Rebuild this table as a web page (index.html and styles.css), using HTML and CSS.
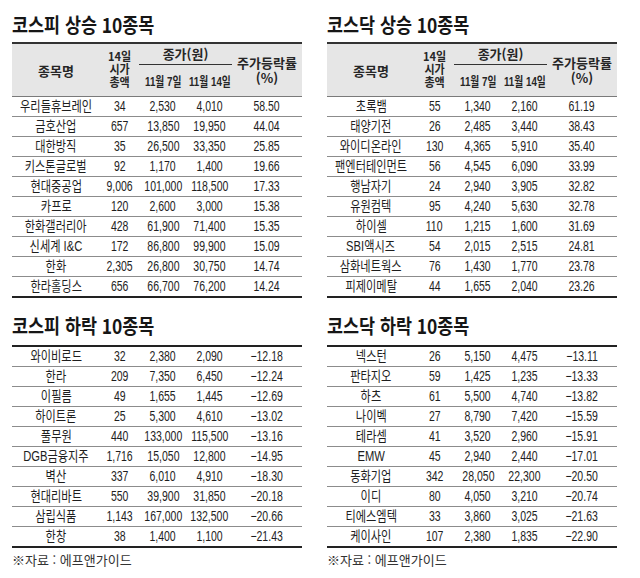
FILE: index.html
```html
<!DOCTYPE html>
<html lang="ko">
<head>
<meta charset="utf-8">
<title>상승·하락 10종목</title>
<link rel="stylesheet" href="styles.css">
</head>
<body>
<div class="page">
  <section class="panel upper">
    <h2 class="title"><span>코스피 상승 10종목</span></h2>
    <table class="stocks">
      <colgroup><col class="c-name"><col class="c-cap"><col class="c-p1"><col class="c-p2"><col class="c-chg"></colgroup>
      <thead>
        <tr><th rowspan="2" class="h-name">종목명</th><th rowspan="2" class="h-cap"><span>14일<br>시가<br>총액</span></th><th colspan="2" class="h-close">종가(원)</th><th rowspan="2" class="h-chg">주가등락률<br>(%)</th></tr>
        <tr><th class="h-date"><span>11월 7일</span></th><th class="h-date"><span>11월 14일</span></th></tr>
      </thead>
      <tbody>
        <tr><td><span>우리들휴브레인</span></td><td><span>34</span></td><td><span>2,530</span></td><td><span>4,010</span></td><td><span>58.50</span></td></tr>
        <tr><td><span>금호산업</span></td><td><span>657</span></td><td><span>13,850</span></td><td><span>19,950</span></td><td><span>44.04</span></td></tr>
        <tr><td><span>대한방직</span></td><td><span>35</span></td><td><span>26,500</span></td><td><span>33,350</span></td><td><span>25.85</span></td></tr>
        <tr><td><span>키스톤글로벌</span></td><td><span>92</span></td><td><span>1,170</span></td><td><span>1,400</span></td><td><span>19.66</span></td></tr>
        <tr><td><span>현대중공업</span></td><td><span>9,006</span></td><td><span>101,000</span></td><td><span>118,500</span></td><td><span>17.33</span></td></tr>
        <tr><td><span>카프로</span></td><td><span>120</span></td><td><span>2,600</span></td><td><span>3,000</span></td><td><span>15.38</span></td></tr>
        <tr><td><span>한화갤러리아</span></td><td><span>428</span></td><td><span>61,900</span></td><td><span>71,400</span></td><td><span>15.35</span></td></tr>
        <tr><td><span>신세계 I&amp;C</span></td><td><span>172</span></td><td><span>86,800</span></td><td><span>99,900</span></td><td><span>15.09</span></td></tr>
        <tr><td><span>한화</span></td><td><span>2,305</span></td><td><span>26,800</span></td><td><span>30,750</span></td><td><span>14.74</span></td></tr>
        <tr><td><span>한라홀딩스</span></td><td><span>656</span></td><td><span>66,700</span></td><td><span>76,200</span></td><td><span>14.24</span></td></tr>
      </tbody>
    </table>
  </section>

  <section class="panel upper">
    <h2 class="title"><span>코스닥 상승 10종목</span></h2>
    <table class="stocks">
      <colgroup><col class="c-name"><col class="c-cap"><col class="c-p1"><col class="c-p2"><col class="c-chg"></colgroup>
      <thead>
        <tr><th rowspan="2" class="h-name">종목명</th><th rowspan="2" class="h-cap"><span>14일<br>시가<br>총액</span></th><th colspan="2" class="h-close">종가(원)</th><th rowspan="2" class="h-chg">주가등락률<br>(%)</th></tr>
        <tr><th class="h-date"><span>11월 7일</span></th><th class="h-date"><span>11월 14일</span></th></tr>
      </thead>
      <tbody>
        <tr><td><span>초록뱀</span></td><td><span>55</span></td><td><span>1,340</span></td><td><span>2,160</span></td><td><span>61.19</span></td></tr>
        <tr><td><span>태양기전</span></td><td><span>26</span></td><td><span>2,485</span></td><td><span>3,440</span></td><td><span>38.43</span></td></tr>
        <tr><td><span>와이디온라인</span></td><td><span>130</span></td><td><span>4,365</span></td><td><span>5,910</span></td><td><span>35.40</span></td></tr>
        <tr><td><span>팬엔터테인먼트</span></td><td><span>56</span></td><td><span>4,545</span></td><td><span>6,090</span></td><td><span>33.99</span></td></tr>
        <tr><td><span>행남자기</span></td><td><span>24</span></td><td><span>2,940</span></td><td><span>3,905</span></td><td><span>32.82</span></td></tr>
        <tr><td><span>유원컴텍</span></td><td><span>95</span></td><td><span>4,240</span></td><td><span>5,630</span></td><td><span>32.78</span></td></tr>
        <tr><td><span>하이셀</span></td><td><span>110</span></td><td><span>1,215</span></td><td><span>1,600</span></td><td><span>31.69</span></td></tr>
        <tr><td><span>SBI액시즈</span></td><td><span>54</span></td><td><span>2,015</span></td><td><span>2,515</span></td><td><span>24.81</span></td></tr>
        <tr><td><span>삼화네트웍스</span></td><td><span>76</span></td><td><span>1,430</span></td><td><span>1,770</span></td><td><span>23.78</span></td></tr>
        <tr><td><span>피제이메탈</span></td><td><span>44</span></td><td><span>1,655</span></td><td><span>2,040</span></td><td><span>23.26</span></td></tr>
      </tbody>
    </table>
  </section>

  <section class="panel lower">
    <h2 class="title"><span>코스피 하락 10종목</span></h2>
    <table class="stocks">
      <colgroup><col class="c-name"><col class="c-cap"><col class="c-p1"><col class="c-p2"><col class="c-chg"></colgroup>
      <tbody>
        <tr><td><span>와이비로드</span></td><td><span>32</span></td><td><span>2,380</span></td><td><span>2,090</span></td><td><span>−12.18</span></td></tr>
        <tr><td><span>한라</span></td><td><span>209</span></td><td><span>7,350</span></td><td><span>6,450</span></td><td><span>−12.24</span></td></tr>
        <tr><td><span>이필름</span></td><td><span>49</span></td><td><span>1,655</span></td><td><span>1,445</span></td><td><span>−12.69</span></td></tr>
        <tr><td><span>하이트론</span></td><td><span>25</span></td><td><span>5,300</span></td><td><span>4,610</span></td><td><span>−13.02</span></td></tr>
        <tr><td><span>풀무원</span></td><td><span>440</span></td><td><span>133,000</span></td><td><span>115,500</span></td><td><span>−13.16</span></td></tr>
        <tr><td><span>DGB금융지주</span></td><td><span>1,716</span></td><td><span>15,050</span></td><td><span>12,800</span></td><td><span>−14.95</span></td></tr>
        <tr><td><span>벽산</span></td><td><span>337</span></td><td><span>6,010</span></td><td><span>4,910</span></td><td><span>−18.30</span></td></tr>
        <tr><td><span>현대리바트</span></td><td><span>550</span></td><td><span>39,900</span></td><td><span>31,850</span></td><td><span>−20.18</span></td></tr>
        <tr><td><span>삼립식품</span></td><td><span>1,143</span></td><td><span>167,000</span></td><td><span>132,500</span></td><td><span>−20.66</span></td></tr>
        <tr><td><span>한창</span></td><td><span>38</span></td><td><span>1,400</span></td><td><span>1,100</span></td><td><span>−21.43</span></td></tr>
      </tbody>
    </table>
    <p class="note">※자료 : 에프앤가이드</p>
  </section>

  <section class="panel lower">
    <h2 class="title"><span>코스닥 하락 10종목</span></h2>
    <table class="stocks">
      <colgroup><col class="c-name"><col class="c-cap"><col class="c-p1"><col class="c-p2"><col class="c-chg"></colgroup>
      <tbody>
        <tr><td><span>넥스턴</span></td><td><span>26</span></td><td><span>5,150</span></td><td><span>4,475</span></td><td><span>−13.11</span></td></tr>
        <tr><td><span>판타지오</span></td><td><span>59</span></td><td><span>1,425</span></td><td><span>1,235</span></td><td><span>−13.33</span></td></tr>
        <tr><td><span>하츠</span></td><td><span>61</span></td><td><span>5,500</span></td><td><span>4,740</span></td><td><span>−13.82</span></td></tr>
        <tr><td><span>나이벡</span></td><td><span>27</span></td><td><span>8,790</span></td><td><span>7,420</span></td><td><span>−15.59</span></td></tr>
        <tr><td><span>테라셈</span></td><td><span>41</span></td><td><span>3,520</span></td><td><span>2,960</span></td><td><span>−15.91</span></td></tr>
        <tr><td><span>EMW</span></td><td><span>45</span></td><td><span>2,940</span></td><td><span>2,440</span></td><td><span>−17.01</span></td></tr>
        <tr><td><span>동화기업</span></td><td><span>342</span></td><td><span>28,050</span></td><td><span>22,300</span></td><td><span>−20.50</span></td></tr>
        <tr><td><span>이디</span></td><td><span>80</span></td><td><span>4,050</span></td><td><span>3,210</span></td><td><span>−20.74</span></td></tr>
        <tr><td><span>티에스엠텍</span></td><td><span>33</span></td><td><span>3,860</span></td><td><span>3,025</span></td><td><span>−21.63</span></td></tr>
        <tr><td><span>케이사인</span></td><td><span>107</span></td><td><span>2,380</span></td><td><span>1,835</span></td><td><span>−22.90</span></td></tr>
      </tbody>
    </table>
    <p class="note">※자료 : 에프앤가이드</p>
  </section>
</div>
</body>
</html>
```

FILE: styles.css
```css
body {
  margin: 0;
  background: #ffffff;
  color: #1e1e1e;
  font-family: "Noto Sans CJK KR", sans-serif;
}

.page {
  display: grid;
  grid-template-columns: 290px 290px;
  column-gap: 25px;
  row-gap: 16px;
  padding: 13px 0 0 12px;
}

.title {
  margin: 0 0 5px;
  font-size: 20px;
  line-height: 24px;
  font-weight: 700;
  color: #161616;
  white-space: nowrap;
}

.title span {
  display: inline-block;
  transform: scaleX(0.87);
  transform-origin: 0 50%;
}

.lower .title {
  margin-bottom: 7px;
}

.stocks {
  width: 290px;
  border-collapse: separate;
  border-spacing: 0;
  table-layout: fixed;
}

.c-name { width: 88px; }
.c-cap { width: 39px; }
.c-p1 { width: 48px; }
.c-p2 { width: 45px; }
.c-chg { width: 70px; }

.stocks th {
  background: #e6e6e6;
  padding: 0;
  font-weight: 700;
  font-size: 13px;
  color: #262626;
  text-align: center;
  vertical-align: middle;
  white-space: nowrap;
}

.stocks thead tr:first-child th {
  border-top: 2px solid #333333;
}

.h-name,
.h-cap,
.h-chg {
  border-bottom: 1px solid #7a7a7a;
}

.h-close {
  height: 20px;
  line-height: 18px;
  border-bottom: 1px solid #333333;
}

.h-cap span {
  display: inline-block;
  font-size: 12px;
  line-height: 13px;
  transform: scaleX(0.92);
}

.h-chg {
  line-height: 15px;
}

.h-date {
  height: 31px;
  border-bottom: 1px solid #7a7a7a;
  font-family: "Liberation Sans", "Noto Sans CJK KR", sans-serif;
}

.h-date span {
  display: inline-block;
  margin: 0 -10px;
  transform: scaleX(0.75);
}

.stocks td {
  height: 19px;
  padding: 0;
  border-bottom: 1px solid #8c8c8c;
  text-align: center;
  vertical-align: middle;
  white-space: nowrap;
  font-family: "Liberation Sans", "Noto Sans CJK KR", sans-serif;
  font-size: 14px;
  line-height: 19px;
  color: #1e1e1e;
}

.stocks td span {
  display: inline-block;
  margin: 0 -12px;
  transform: scaleX(0.75);
}

.stocks td:first-child span {
  font-size: 14px;
  transform: scaleX(0.8);
}

.stocks tbody tr:last-child td {
  border-bottom: 2px solid #222222;
}

.lower tbody tr:first-child td {
  height: 17px;
  border-top: 2px solid #222222;
}

.note {
  margin: 4px 0 0;
  font-size: 13px;
  line-height: 16px;
  color: #333333;
}
```
